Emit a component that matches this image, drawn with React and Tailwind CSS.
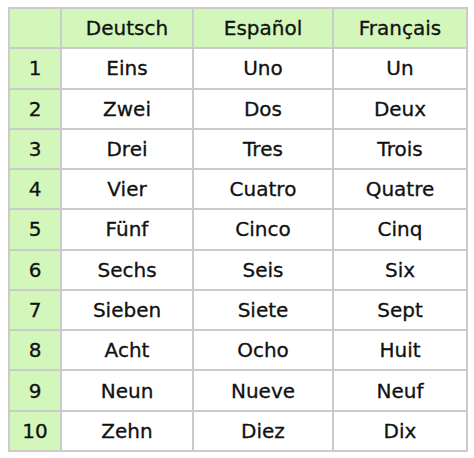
const rows = [
  ["Eins", "Uno", "Un"],
  ["Zwei", "Dos", "Deux"],
  ["Drei", "Tres", "Trois"],
  ["Vier", "Cuatro", "Quatre"],
  ["Fünf", "Cinco", "Cinq"],
  ["Sechs", "Seis", "Six"],
  ["Sieben", "Siete", "Sept"],
  ["Acht", "Ocho", "Huit"],
  ["Neun", "Nueve", "Neuf"],
  ["Zehn", "Diez", "Dix"],
];

const cell = "flex items-center justify-center";
const green = "bg-[#d3f6bb]";

export default function App() {
  return (
    <div className="w-[474px] h-[458px] bg-white pt-[7px] pl-[8px] font-['DejaVu_Sans',sans-serif] text-[20px] text-[#111] [-webkit-text-stroke:0.3px_#111]">
      <div className="w-[460px] h-[445px] bg-[#cbcbcb] p-[2px] grid grid-cols-[50px_130px_138px_132px] grid-rows-11 gap-[2px]">
        {/* header */}
        <div className={`${cell} ${green}`}></div>
        <div className={`${cell} ${green}`}>Deutsch</div>
        <div className={`${cell} ${green}`}>Español</div>
        <div className={`${cell} ${green}`}>Français</div>

        {rows.map((r, i) => (
          <>
            <div key={"n" + i} className={`${cell} ${green}`}>{i + 1}</div>
            <div key={"a" + i} className={`${cell} bg-white`}>{r[0]}</div>
            <div key={"b" + i} className={`${cell} bg-white`}>{r[1]}</div>
            <div key={"c" + i} className={`${cell} bg-white`}>{r[2]}</div>
          </>
        ))}
      </div>
    </div>
  );
}
